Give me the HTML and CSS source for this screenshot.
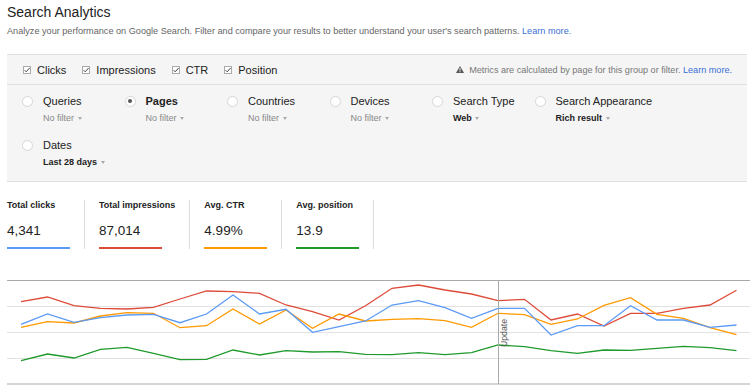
FILE: index.html
```html
<!DOCTYPE html>
<html lang="en">
<head>
  <meta charset="UTF-8">
  <title>Search Analytics</title>
  <link rel="stylesheet" href="styles.css">
</head>
<body>
  <div class="page">
    <h1 class="title">Search Analytics</h1>
    <p class="intro">Analyze your performance on Google Search. Filter and compare your results to better understand your user's search patterns. <a href="#">Learn more.</a></p>

    <div class="panel">
      <div class="toggles">
        <label class="toggle"><svg class="box" viewBox="0 0 8 8"><rect x="0.5" y="0.5" width="7" height="7" fill="#fff" stroke="#aaa"/><path d="M1.6 4.2 L3.2 5.8 L6.6 2" fill="none" stroke="#444" stroke-width="1"/></svg>Clicks</label>
        <label class="toggle"><svg class="box" viewBox="0 0 8 8"><rect x="0.5" y="0.5" width="7" height="7" fill="#fff" stroke="#aaa"/><path d="M1.6 4.2 L3.2 5.8 L6.6 2" fill="none" stroke="#444" stroke-width="1"/></svg>Impressions</label>
        <label class="toggle"><svg class="box" viewBox="0 0 8 8"><rect x="0.5" y="0.5" width="7" height="7" fill="#fff" stroke="#aaa"/><path d="M1.6 4.2 L3.2 5.8 L6.6 2" fill="none" stroke="#444" stroke-width="1"/></svg>CTR</label>
        <label class="toggle"><svg class="box" viewBox="0 0 8 8"><rect x="0.5" y="0.5" width="7" height="7" fill="#fff" stroke="#aaa"/><path d="M1.6 4.2 L3.2 5.8 L6.6 2" fill="none" stroke="#444" stroke-width="1"/></svg>Position</label>
        <div class="notice">
          <svg class="warn" viewBox="0 0 8 7"><path d="M4 0 L8 7 L0 7 Z" fill="#555"/><rect x="3.5" y="2.2" width="1" height="2.4" fill="#fff"/><rect x="3.5" y="5.2" width="1" height="1" fill="#fff"/></svg>
          <span>Metrics are calculated by page for this group or filter. <a href="#">Learn more.</a></span>
        </div>
      </div>

      <div class="filters">
        <div class="filter">
          <span class="radio"></span>
          <div>
            <div class="filter-name">Queries</div>
            <div class="filter-value">No filter <span class="caret"></span></div>
          </div>
        </div>
        <div class="filter">
          <span class="radio checked"></span>
          <div>
            <div class="filter-name active">Pages</div>
            <div class="filter-value">No filter <span class="caret"></span></div>
          </div>
        </div>
        <div class="filter">
          <span class="radio"></span>
          <div>
            <div class="filter-name">Countries</div>
            <div class="filter-value">No filter <span class="caret"></span></div>
          </div>
        </div>
        <div class="filter">
          <span class="radio"></span>
          <div>
            <div class="filter-name">Devices</div>
            <div class="filter-value">No filter <span class="caret"></span></div>
          </div>
        </div>
        <div class="filter">
          <span class="radio"></span>
          <div>
            <div class="filter-name">Search Type</div>
            <div class="filter-value set">Web <span class="caret"></span></div>
          </div>
        </div>
        <div class="filter">
          <span class="radio"></span>
          <div>
            <div class="filter-name">Search Appearance</div>
            <div class="filter-value set">Rich result <span class="caret"></span></div>
          </div>
        </div>
        <div class="filter">
          <span class="radio"></span>
          <div>
            <div class="filter-name">Dates</div>
            <div class="filter-value set">Last 28 days <span class="caret"></span></div>
          </div>
        </div>
      </div>
    </div>

    <div class="totals">
      <div class="total">
        <div class="total-label">Total clicks</div>
        <div class="total-value">4,341</div>
        <div class="total-bar clicks"></div>
      </div>
      <div class="total">
        <div class="total-label">Total impressions</div>
        <div class="total-value">87,014</div>
        <div class="total-bar impressions"></div>
      </div>
      <div class="total">
        <div class="total-label">Avg. CTR</div>
        <div class="total-value">4.99%</div>
        <div class="total-bar ctr"></div>
      </div>
      <div class="total">
        <div class="total-label">Avg. position</div>
        <div class="total-value">13.9</div>
        <div class="total-bar position"></div>
      </div>
    </div>

    <svg class="chart" viewBox="7 279 743 106" width="743" height="106">
      <line x1="7" y1="280.5" x2="750" y2="280.5" stroke="#aaa"/>
      <line x1="7" y1="306.5" x2="750" y2="306.5" stroke="#e2e2e2"/>
      <line x1="7" y1="332.5" x2="750" y2="332.5" stroke="#e2e2e2"/>
      <line x1="7" y1="358.5" x2="750" y2="358.5" stroke="#e2e2e2"/>
      <line x1="7" y1="384" x2="750" y2="384" stroke="#aaa"/>

      <polyline class="line" stroke="#dd4b39" points="21,301.7 47.5,297 74,305.7 100.5,308.3 127,309 153.5,307.3 180,299 206.5,291 233,291.7 259.5,293.3 286,305 312.5,311.7 339,320 365.5,305.7 392,288.3 418.5,285 445,290 471.5,294 498,300.7 524.5,299.3 551,320 577.5,314 604,326 630.5,313.3 657,313.3 683.5,308.3 710,305 736.5,290.3"/>
      <polyline class="line" stroke="#ff9900" points="21,327.3 47.5,321.7 74,323 100.5,316 127,312.7 153.5,313.3 180,327.7 206.5,325.7 233,309 259.5,324 286,310 312.5,328.3 339,314 365.5,321 392,319.3 418.5,318.7 445,320.7 471.5,327.3 498,313.3 524.5,314.7 551,324.3 577.5,319 604,305.3 630.5,297.7 657,314.3 683.5,318.3 710,327.7 736.5,334.7"/>
      <polyline class="line" stroke="#5b9af5" points="21,324.3 47.5,314 74,322.3 100.5,317.7 127,315 153.5,314.3 180,322.7 206.5,314 233,295 259.5,314 286,309.3 312.5,332.3 339,326.7 365.5,321 392,305 418.5,300.7 445,307.7 471.5,318.3 498,308.3 524.5,308.3 551,335 577.5,325.7 604,325.7 630.5,305.7 657,320 683.5,320 710,327.3 736.5,325"/>
      <polyline class="line" stroke="#1f9a2c" points="21,360.7 47.5,354 74,358 100.5,349.3 127,347.3 153.5,353.3 180,359.7 206.5,359.3 233,350 259.5,355 286,350.7 312.5,352 339,351.7 365.5,354.3 392,354.7 418.5,352.7 445,354.7 471.5,352.7 498,345 524.5,346.7 551,350.7 577.5,353.3 604,350 630.5,350.3 657,348.3 683.5,346.3 710,347.7 736.5,350.7"/>

      <line x1="498.5" y1="280" x2="498.5" y2="384" stroke="#aaa"/>
      <text class="annotation" x="506.5" y="347" transform="rotate(-90 506.5 347)">Update</text>
    </svg>
  </div>
</body>
</html>
```

FILE: styles.css
```css
body {
  margin: 0;
  font-family: "Liberation Sans", Arial, sans-serif;
  color: #222;
  background: #fff;
}
a {
  color: #3b6fd6;
  text-decoration: none;
}
.page {
  padding: 4px 0 0 7px;
}
.title {
  margin: 0;
  font-size: 14px;
  font-weight: normal;
  line-height: 17px;
  color: #222;
}
.intro {
  margin: 4px 0 0;
  font-size: 9.15px;
  line-height: 12px;
  color: #666;
}
.panel {
  margin: 17px 3px 0 0;
  border-top: 1px solid #e0e0e0;
  border-bottom: 1px solid #e0e0e0;
  background: #f5f5f5;
}
.toggles {
  display: flex;
  align-items: center;
  height: 29px;
  padding: 0 15px 0 16px;
  border-bottom: 1px solid #e0e0e0;
}
.toggle {
  display: flex;
  align-items: center;
  gap: 6px;
  margin-right: 16px;
  font-size: 11px;
  color: #222;
}
.box {
  width: 8px;
  height: 8px;
}
.notice {
  display: flex;
  align-items: center;
  gap: 5px;
  margin-left: auto;
  font-size: 9.1px;
  color: #777;
  white-space: nowrap;
}
.warn {
  width: 8px;
  height: 7px;
}
.filters {
  display: grid;
  grid-template-columns: repeat(6, 102.5px);
  row-gap: 13px;
  padding: 9px 0 12px 15px;
}
.filter {
  display: flex;
  gap: 10px;
}
.radio {
  flex: none;
  box-sizing: border-box;
  width: 11px;
  height: 11px;
  margin-top: 1.5px;
  border: 1px solid #d6d6d6;
  border-radius: 50%;
  background: #fff;
  position: relative;
}
.radio.checked::after {
  content: "";
  position: absolute;
  left: 2.5px;
  top: 2.5px;
  width: 4px;
  height: 4px;
  border-radius: 50%;
  background: #555;
}
.filter-name {
  font-size: 11px;
  line-height: 14px;
  color: #222;
  white-space: nowrap;
}
.filter-name.active {
  font-weight: bold;
}
.filter-value {
  margin-top: 4px;
  font-size: 9px;
  line-height: 13px;
  color: #888;
  white-space: nowrap;
}
.filter-value.set {
  font-weight: bold;
  color: #222;
}
.caret {
  display: inline-block;
  width: 0;
  height: 0;
  margin-left: 1px;
  vertical-align: middle;
  border-left: 2.5px solid transparent;
  border-right: 2.5px solid transparent;
  border-top: 3px solid #aaa;
}
.totals {
  display: flex;
  margin-top: 18px;
}
.total {
  padding: 0 14px;
  border-right: 1px solid #ddd;
}
.total:first-child {
  padding-left: 0;
}
.total-label {
  font-size: 9px;
  font-weight: bold;
  line-height: 10px;
  white-space: nowrap;
}
.total-value {
  margin-top: 13px;
  font-size: 13.5px;
  line-height: 16px;
}
.total-bar {
  width: 63px;
  height: 2px;
  margin-top: 8px;
}
.clicks { background: #5b9af5; }
.impressions { background: #dd4b39; }
.ctr { background: #ff9900; }
.position { background: #1f9a2c; }
.chart {
  display: block;
  margin-top: 30px;
}
.line {
  fill: none;
  stroke-width: 1.3;
}
.annotation {
  font-size: 8.7px;
  fill: #555;
  font-family: "Liberation Sans", Arial, sans-serif;
}
```
